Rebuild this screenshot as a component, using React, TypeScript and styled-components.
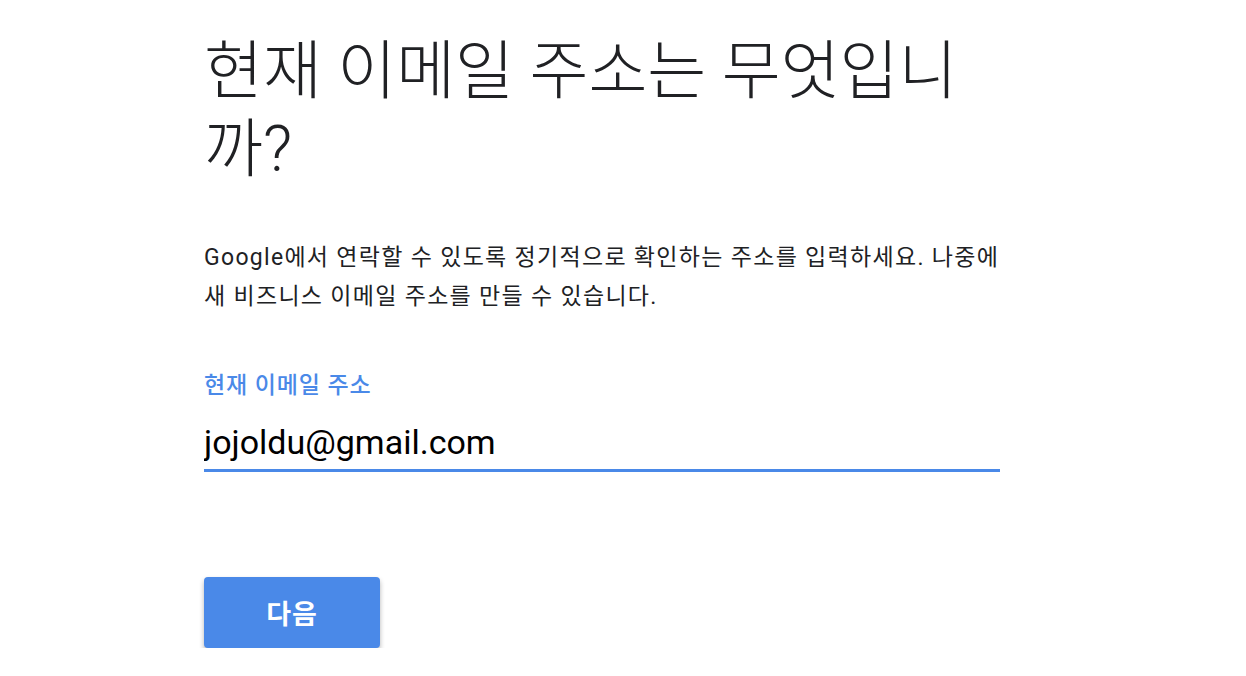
import React from "react";
import styled, { createGlobalStyle } from "styled-components";

const GlobalStyle = createGlobalStyle`
  html, body {
    margin: 0;
    padding: 0;
    background: #ffffff;
  }
  body {
    font-family: Roboto, "Noto Sans CJK KR", sans-serif;
  }
`;

const Page = styled.div`
  display: flex;
  flex-direction: column;
  width: 796px;
  padding: 33px 0 0 204px;
`;

const Title = styled.h1`
  margin: 0;
  font-family: Roboto, "Noto Sans CJK KR", sans-serif;
  font-weight: 300;
  font-size: 64px;
  line-height: 78px;
  color: #202124;
`;

const Description = styled.p`
  margin: 49px 0 0;
  font-family: Roboto, "Noto Sans CJK KR", sans-serif;
  font-size: 23px;
  letter-spacing: 1.3px;
  line-height: 39px;
  color: #202124;
`;

const Field = styled.div`
  display: flex;
  flex-direction: column;
  margin-top: 56px;
`;

const Label = styled.label`
  font-family: Roboto, "Noto Sans CJK KR", sans-serif;
  font-weight: 500;
  font-size: 23px;
  letter-spacing: 0.9px;
  line-height: 28px;
  color: #4a89e8;
`;

const Input = styled.input`
  margin-top: 19px;
  padding: 0 0 5px;
  border: none;
  border-bottom: 3px solid #4a89e8;
  outline: none;
  background: transparent;
  font-family: Roboto, sans-serif;
  font-size: 34px;
  line-height: 40px;
  height: 45px;
  color: #000000;
`;

const NextButton = styled.button`
  margin-top: 105px;
  width: 176px;
  height: 71px;
  border: none;
  border-radius: 4px;
  background-color: #4a89e8;
  color: #ffffff;
  font-family: Roboto, "Noto Sans CJK KR", sans-serif;
  font-weight: 700;
  font-size: 27px;
  letter-spacing: 1px;
  box-shadow: 0 3px 5px rgba(0, 0, 0, 0.3);
  cursor: pointer;
`;

export default function App() {
  return (
    <>
      <GlobalStyle />
      <Page>
        <Title>
          현재 이메일 주소는 무엇입니
          <br />
          까?
        </Title>
        <Description>
          Google에서 연락할 수 있도록 정기적으로 확인하는 주소를 입력하세요. 나중에
          <br />새 비즈니스 이메일 주소를 만들 수 있습니다.
        </Description>
        <Field>
          <Label>현재 이메일 주소</Label>
          <Input defaultValue="jojoldu@gmail.com" />
        </Field>
        <NextButton>다음</NextButton>
      </Page>
    </>
  );
}
